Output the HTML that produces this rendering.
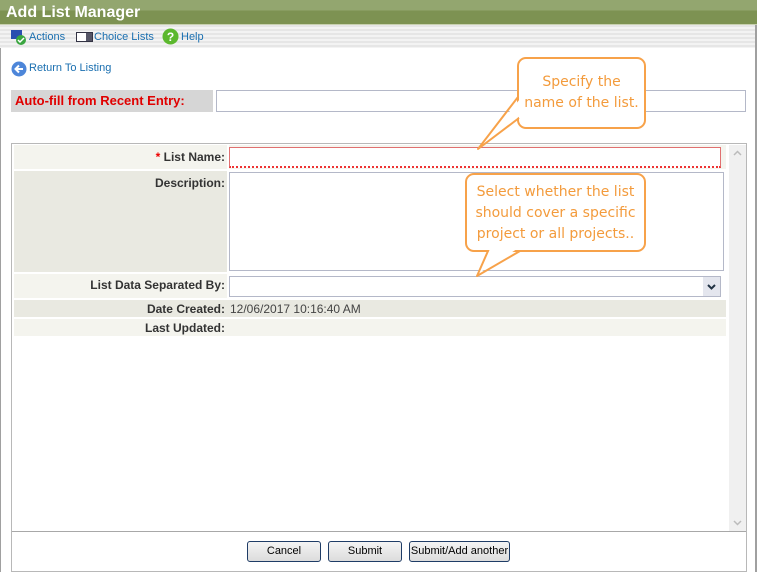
<!DOCTYPE html>
<html><head><style>
*{margin:0;padding:0;box-sizing:border-box}
body{width:757px;height:572px;overflow:hidden;background:#fff;font-family:"Liberation Sans",Arial,sans-serif;position:relative}
.frame{position:absolute;left:0;top:0;width:757px;height:572px;border-left:1px solid #a0a0a0;border-right:2px solid #a0a0a0}
.title{position:absolute;left:0;top:0;width:757px;height:25px;background:linear-gradient(#93a66f 0,#93a66f 10px,#7d9252 11px,#7d9252 24px);border-bottom:1px solid #c8d0b0;color:#fff;font-weight:bold;font-size:16px;line-height:26px;padding-left:6px}
.tool{position:absolute;left:0;top:25px;width:755px;height:23px;background:repeating-linear-gradient(#e6e6e6 0,#e6e6e6 2px,#f3f3f3 2px,#f3f3f3 4px);font-size:11px;color:#1a6fb0}
.tool span{position:absolute;top:6px}
a{color:#1a6fb0}
.abs{position:absolute}
.lbl{position:absolute;left:14px;width:213px;text-align:right;font-size:12px;font-weight:bold;color:#333;padding-right:2px}
.inp{position:absolute;background:#fff;border:1px solid #b4b8c8}
.call{position:absolute;border:2px solid #f7a24a;border-radius:9px;background:#fff;color:#f39b3c;font-family:"DejaVu Sans",sans-serif;font-size:14px;text-align:center;line-height:21px}
.btn{position:absolute;top:541px;height:21px;border:1px solid #1f3c66;border-radius:3px;background:linear-gradient(#f4f4f4,#dcdcdc);font-size:11px;text-align:center;line-height:19px;color:#000}
</style></head><body>
<div class="frame"></div>
<div class="title">Add List Manager</div>
<div class="tool">
<svg class="abs" style="left:11px;top:4px" width="16" height="16"><rect x="0" y="1" width="11" height="9" fill="#2a4fb0"/><circle cx="10" cy="11" r="5" fill="#3aa640"/><path d="M7 11l2 2 4-4" stroke="#fff" stroke-width="1.5" fill="none"/></svg>
<span style="left:29px">Actions</span>
<svg class="abs" style="left:76px;top:7px" width="17" height="10"><rect x="0.5" y="0.5" width="16" height="9" fill="#fff" stroke="#334"/><rect x="10" y="1" width="6" height="8" fill="#556"/></svg>
<span style="left:94px">Choice Lists</span>
<svg class="abs" style="left:162px;top:3px" width="17" height="17"><circle cx="8.5" cy="8.5" r="8" fill="#5cb82e"/><text x="8.5" y="13" font-size="12" font-weight="bold" fill="#fff" text-anchor="middle" font-family="Liberation Sans">?</text></svg>
<span style="left:181px">Help</span>
</div>
<svg class="abs" style="left:11px;top:61px" width="16" height="16"><circle cx="8" cy="8" r="7.5" fill="#4d86d9"/><path d="M12 8H5M8 4.5L4.5 8 8 11.5" stroke="#fff" stroke-width="2" fill="none"/></svg>
<a class="abs" style="left:29px;top:62px;font-size:11px">Return To Listing</a>
<div class="abs" style="left:11px;top:90px;width:202px;height:22px;background:#d6d6d6;color:#e00000;font-weight:bold;font-size:13px;line-height:22px;padding-left:4px">Auto-fill from Recent Entry:</div>
<div class="inp" style="left:216px;top:90px;width:530px;height:22px"></div>

<div class="abs" style="left:11px;top:143px;width:736px;height:429px;border:1px solid #b8b8b8"></div>
<div class="abs" style="left:729px;top:145px;width:17px;height:386px;background:#f0f0f0"></div>
<svg class="abs" style="left:729px;top:145px" width="17" height="386"><path d="M5 10l3.5-3.5L12 10" stroke="#bbb" stroke-width="1.5" fill="none"/><path d="M5 376l3.5 3.5L12 376" stroke="#bbb" stroke-width="1.5" fill="none"/></svg>
<div class="abs" style="left:12px;top:531px;width:734px;height:1px;background:#a8a8a8"></div>

<div class="abs" style="left:14px;top:145px;width:213px;height:24px;background:#f4f4ee"></div>
<div class="abs" style="left:229px;top:145px;width:497px;height:24px;background:#f4f4ee"></div>
<div class="abs" style="left:14px;top:171px;width:213px;height:101px;background:#e9e9e1"></div>
<div class="abs" style="left:14px;top:274px;width:213px;height:24px;background:#f4f4ee"></div>
<div class="abs" style="left:14px;top:300px;width:712px;height:17px;background:#e9e9e1"></div>
<div class="abs" style="left:14px;top:319px;width:712px;height:17px;background:#f4f4ee"></div>

<div class="lbl" style="top:150px"><span style="color:#e00">*</span> List Name:</div>
<div class="inp" style="left:229px;top:147px;width:492px;height:21px;border-color:#e07070;border-bottom:2px dotted #e33"></div>
<div class="lbl" style="top:176px">Description:</div>
<div class="inp" style="left:229px;top:172px;width:495px;height:99px"></div>
<div class="lbl" style="top:278px">List Data Separated By:</div>
<div class="inp" style="left:229px;top:276px;width:492px;height:21px"></div>
<svg class="abs" style="left:703px;top:277px" width="17" height="19"><rect width="17" height="19" fill="#e4e6ee"/><path d="M5 8l3.5 3.5L12 8" stroke="#234" stroke-width="2" fill="none"/></svg>
<div class="lbl" style="top:302px">Date Created:</div>
<div class="abs" style="left:230px;top:302px;font-size:12px;color:#444">12/06/2017 10:16:40 AM</div>
<div class="lbl" style="top:321px">Last Updated:</div>

<div class="btn" style="left:247px;width:74px">Cancel</div>
<div class="btn" style="left:328px;width:74px">Submit</div>
<div class="btn" style="left:409px;width:101px">Submit/Add another</div>

<div class="call" style="left:517px;top:57px;width:129px;height:72px;padding-top:13px">Specify the<br>name of the list.</div>
<div class="call" style="left:465px;top:173px;width:181px;height:79px;padding-top:7px">Select whether the list<br>should cover a specific<br>project or all projects..</div>
<svg class="abs" style="left:0;top:0" width="757" height="572">
<polygon points="520,99 481,146 520,116" fill="#fff"/>
<polyline points="518,97 478,149 519,118" fill="none" stroke="#f7a24a" stroke-width="2" stroke-linejoin="round"/>
<polygon points="490,249 479,273 517,249" fill="#fff"/>
<polyline points="488,251 477,276 520,251" fill="none" stroke="#f7a24a" stroke-width="2" stroke-linejoin="round"/>
</svg>
</body></html>
